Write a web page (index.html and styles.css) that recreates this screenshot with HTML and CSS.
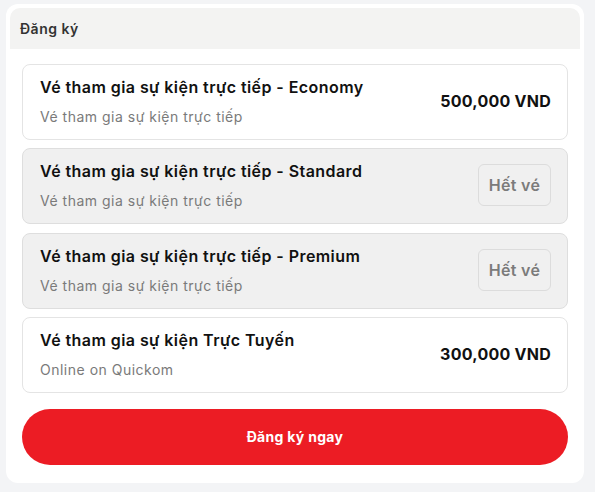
FILE: index.html
```html
<!DOCTYPE html>
<html lang="vi">
<head>
<meta charset="utf-8">
<link rel="stylesheet" href="styles.css">
</head>
<body>
<div class="card">
  <div class="card-header">Đăng ký</div>
  <div class="card-body">
    <div class="ticket">
      <div class="ticket-info">
        <div class="ticket-title">Vé tham gia sự kiện trực tiếp - Economy</div>
        <div class="ticket-sub">Vé tham gia sự kiện trực tiếp</div>
      </div>
      <div class="ticket-price">500,000 VND</div>
    </div>
    <div class="ticket soldout">
      <div class="ticket-info">
        <div class="ticket-title">Vé tham gia sự kiện trực tiếp - Standard</div>
        <div class="ticket-sub">Vé tham gia sự kiện trực tiếp</div>
      </div>
      <div class="soldout-btn">Hết vé</div>
    </div>
    <div class="ticket soldout">
      <div class="ticket-info">
        <div class="ticket-title">Vé tham gia sự kiện trực tiếp - Premium</div>
        <div class="ticket-sub">Vé tham gia sự kiện trực tiếp</div>
      </div>
      <div class="soldout-btn">Hết vé</div>
    </div>
    <div class="ticket">
      <div class="ticket-info">
        <div class="ticket-title">Vé tham gia sự kiện Trực Tuyến</div>
        <div class="ticket-sub">Online on Quickom</div>
      </div>
      <div class="ticket-price">300,000 VND</div>
    </div>
    <button class="register-btn">Đăng ký ngay</button>
  </div>
</div>
</body>
</html>
```
FILE: styles.css
```css
* { box-sizing: border-box; }
html, body { margin: 0; padding: 0; }
body {
  background: #f3f4f6;
  font-family: Inter, "Noto Sans", sans-serif;
  color: #111;
  padding: 4px 11px 0 6px;
}
.card {
  background: #fff;
  border-radius: 12px;
  padding: 4px 4px 18px;
  width: 578px;
}
.card-header {
  background: #f3f3f2;
  border-radius: 10px 10px 0 0;
  height: 41px;
  padding: 0 10px;
  display: flex;
  align-items: center;
  font-size: 14px;
  font-weight: 600;
  letter-spacing: 0.5px;
  color: #333;
}
.card-body {
  padding: 15px 12px 0;
  display: flex;
  flex-direction: column;
  gap: 8.33px;
}
.ticket {
  border: 1px solid #e4e4e4;
  border-radius: 8px;
  padding: 10px 16px 12px 17px;
  display: flex;
  align-items: center;
  justify-content: space-between;
  height: 76px;
}
.ticket.soldout {
  background: #f0f0f0;
  border-color: #dedede;
}
.ticket-info { display: flex; flex-direction: column; gap: 8px; }
.ticket-title {
  font-size: 16px;
  font-weight: 600;
  line-height: 24px;
  letter-spacing: 0.43px;
  color: #111;
}
.ticket-sub {
  font-size: 14px;
  line-height: 20px;
  letter-spacing: 0.5px;
  color: #7a7a7a;
}
.ticket-price {
  font-size: 16px;
  font-weight: 700;
  letter-spacing: 0.25px;
  color: #111;
}
.soldout-btn {
  border: 1px solid #dcdcdc;
  border-radius: 6px;
  width: 73px;
  height: 42px;
  display: flex;
  align-items: center;
  justify-content: center;
  font-size: 16px;
  font-weight: 600;
  letter-spacing: 0.3px;
  color: #7b7b7b;
}
.register-btn {
  margin-top: 7.67px;
  height: 56px;
  border: none;
  border-radius: 28px;
  background: #ec1c24;
  color: #fff;
  font-family: Inter, "Noto Sans", sans-serif;
  font-size: 14px;
  font-weight: 700;
  letter-spacing: 0.3px;
}
```
